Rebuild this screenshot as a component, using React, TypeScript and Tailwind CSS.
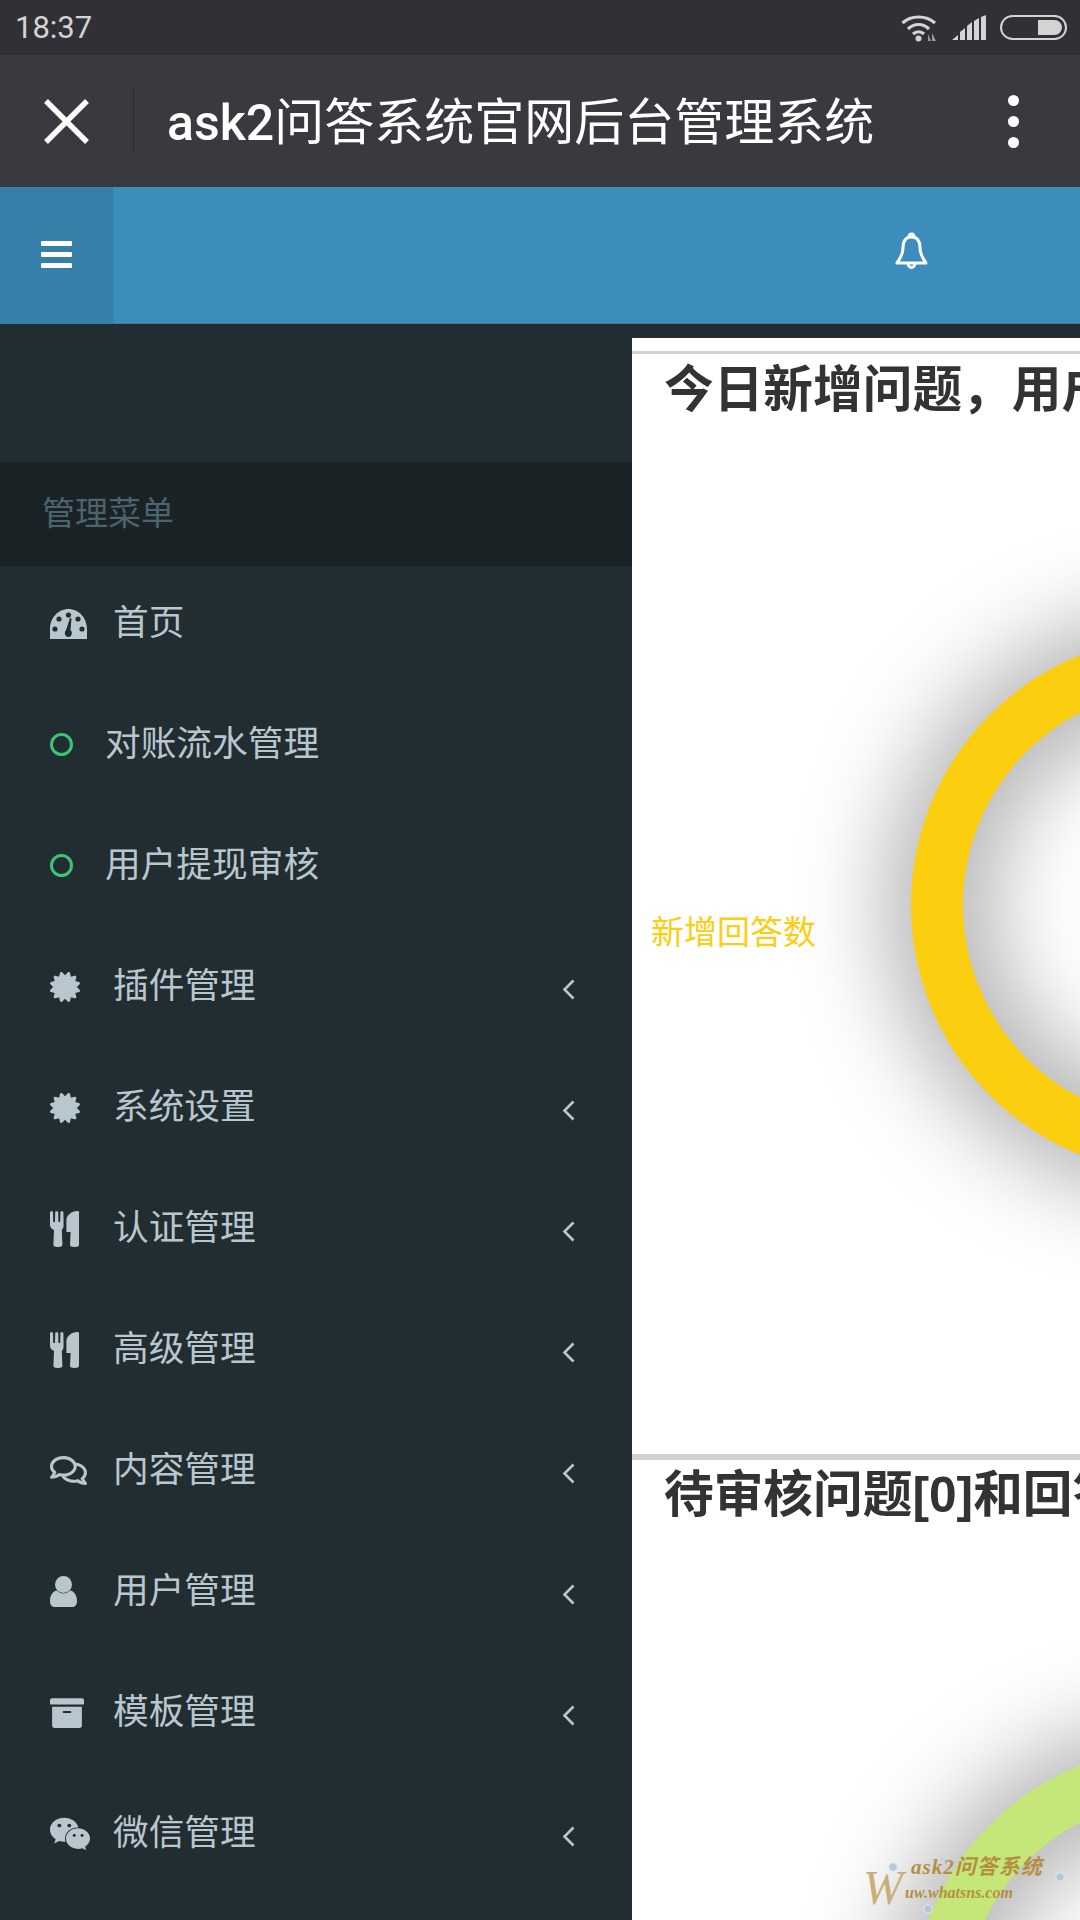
import React from "react";
import { FaCertificate, FaRegComments, FaArchive, FaWeixin } from "react-icons/fa";

const SANS = "font-['Liberation_Sans','Noto_Sans_CJK_SC',sans-serif]";

function Dashboard() {
  return (
    <svg width="37" height="30" viewBox="0 0 37 30" className="block">
      <path d="M0 30 C-1 28 0 24 0 20 C0 9 8 0 18.5 0 C29 0 37 9 37 20 C37 24 38 28 37 30 Z" fill="#b8c7ce" />
      <g fill="#222d32">
        <circle cx="18.5" cy="6" r="2.6" />
        <circle cx="9" cy="10" r="2.6" />
        <circle cx="28" cy="10" r="2.6" />
        <circle cx="5" cy="20" r="2.6" />
        <circle cx="32" cy="20" r="2.6" />
        <path d="M16 21 L20 9 L21.5 9.5 L20.5 21 C23 23 22 28 18.5 28 C14.5 28 14 23 16 21 Z" />
      </g>
    </svg>
  );
}

function Cutlery() {
  return (
    <svg width="29" height="36" viewBox="0 0 29 36" className="block" fill="#b8c7ce">
      <path d="M0 1 C0 0 3 0 3 1 L3.2 11 L5 11 L5.2 1 C5.2 0 8.2 0 8.2 1 L8.4 11 L10.2 11 L10.4 1 C10.4 0 13.4 0 13.4 1 L13.6 14 C13.6 17 12.5 18 11.8 19 L12.4 34 C12.4 36.7 3.4 36.7 3.4 34 L4 19 C1.5 18 0 16 0 14 Z" />
      <path d="M29 1 L29 34 C29 36.7 20 36.7 20 34 L20.6 21 L16.4 21 L16.4 9 C16.4 4 22 0 27 0 C28 0 29 0 29 1 Z" />
    </svg>
  );
}

function User() {
  return (
    <svg width="27" height="31" viewBox="0 0 27 31" className="block" fill="#b8c7ce">
      <circle cx="13.5" cy="8.5" r="8.5" />
      <path d="M0 25 C0 19 3 15 7 14.5 C9 16.5 11 17.5 13.5 17.5 C16 17.5 18 16.5 20 14.5 C24 15 27 19 27 25 C27 29 25 31 22 31 L5 31 C2 31 0 29 0 25 Z" />
    </svg>
  );
}

function Chevron() {
  return (
    <svg width="13" height="21" viewBox="0 0 13 21" className="block" fill="none" stroke="#b8c7ce" strokeWidth="2.6">
      <path d="M11.5 1.5 L2.5 10.5 L11.5 19.5" />
    </svg>
  );
}

function Ring({ cy, color, id, height }: { cy: number; color: string; id: string; height: number }) {
  return (
    <svg width="448" height={height} viewBox={`0 0 448 ${height}`} className="block">
      <defs>
        <filter id={id} filterUnits="userSpaceOnUse" x="-400" y="-800" width="1800" height="2800">
          <feGaussianBlur stdDeviation="52" />
        </filter>
      </defs>
      <circle cx="548" cy={cy} r="243" fill="none" stroke="#000" strokeOpacity="0.6" strokeWidth="52" filter={`url(#${id})`} />
      <circle cx="548" cy={cy} r="243" fill="none" stroke={color} strokeWidth="52" />
    </svg>
  );
}

function Diamond({ className }: { className: string }) {
  return (
    <svg width="10" height="10" viewBox="0 0 10 10" className={className}>
      <circle cx="5" cy="5" r="4.2" fill="#b6c8d6" stroke="#e4ecf2" strokeWidth="1" />
    </svg>
  );
}

type Item = { label: string; icon: React.ReactNode; chevron?: boolean; sub?: boolean };

const dot = <span className="block w-[23px] h-[23px] rounded-full border-[3px] border-[#3dc373]" />;
const cert = <FaCertificate className="block text-[#b8c7ce]" size={30} />;

const items: Item[] = [
  { label: "首页", icon: <Dashboard /> },
  { label: "对账流水管理", icon: dot, sub: true },
  { label: "用户提现审核", icon: dot, sub: true },
  { label: "插件管理", icon: cert, chevron: true },
  { label: "系统设置", icon: cert, chevron: true },
  { label: "认证管理", icon: <Cutlery />, chevron: true },
  { label: "高级管理", icon: <Cutlery />, chevron: true },
  { label: "内容管理", icon: <FaRegComments className="block text-[#b8c7ce]" size={37} />, chevron: true },
  { label: "用户管理", icon: <User />, chevron: true },
  { label: "模板管理", icon: <FaArchive className="block text-[#b8c7ce]" size={34} />, chevron: true },
  { label: "微信管理", icon: <FaWeixin className="block -ml-[1px] text-[#b8c7ce]" size={42} />, chevron: true },
];

export default function App() {
  return (
    <div className={`w-[1080px] h-[1920px] overflow-hidden flex flex-col ${SANS}`}>
      {/* status bar */}
      <div className="h-[55px] shrink-0 bg-[#303136] flex items-center pl-[15px] pr-[13px]">
        <span className="font-['Roboto','Noto_Sans',sans-serif] text-[31px] leading-none text-[#d4d4d4]">18:37</span>
        <div className="ml-auto flex items-center">
          <svg width="36" height="28" viewBox="0 0 36 28" className="block" fill="none" stroke="#d4d4d4" strokeWidth="3.2">
            <path d="M1.5 9 C10 1 25 1 34 9" />
            <path d="M7 15 C13 9 22 9 28 15" />
            <path d="M12 20 C15.5 17 20 17 23 20" />
            <circle cx="17.5" cy="24.5" r="3" fill="#d4d4d4" stroke="none" />
            <path d="M27 27 L27 20 L30 27 Z M31 27 L31 19 L35 27 Z" fill="#9a9a9a" stroke="none" />
          </svg>
          <svg width="35" height="25" viewBox="0 0 35 25" className="block ml-[15px]" fill="#d4d4d4">
            <path d="M0 25 L6 20 L6 25 Z M8 25 L8 17 L13 13 L13 25 Z M15 25 L15 11 L20 7 L20 25 Z M22 25 L22 6 L27 3 L27 25 Z M29 25 L29 2 L34 0 L34 25 Z" />
          </svg>
          <div className="ml-[13px] w-[67px] h-[25px] rounded-full border-[2px] border-[#d4d4d4] p-[3px] flex justify-end">
            <div className="w-[24px] h-full bg-[#d4d4d4] rounded-r-full" />
          </div>
        </div>
      </div>

      {/* title bar */}
      <div className="h-[132px] shrink-0 bg-[#393a40] flex items-center">
        <div className="w-[134px] h-[66px] border-r-[1px] border-[#2a2b2f] flex items-center pl-[44px]">
          <svg width="45" height="45" viewBox="0 0 45 45" className="block" stroke="#fff" strokeWidth="5.4" fill="none">
            <path d="M2 2 L43 43 M43 2 L2 43" />
          </svg>
        </div>
        <div className="ml-[33px] pt-[4px] text-[50px] leading-none text-white whitespace-nowrap font-['Roboto','Noto_Sans_CJK_SC',sans-serif]">
          <span className="font-medium">ask2</span>问答系统官网后台管理系统
        </div>
        <div className="ml-auto mr-[61px] flex flex-col gap-[10px]">
          <span className="block w-[11px] h-[11px] rounded-full bg-white" />
          <span className="block w-[11px] h-[11px] rounded-full bg-white" />
          <span className="block w-[11px] h-[11px] rounded-full bg-white" />
        </div>
      </div>

      {/* blue header */}
      <div className="h-[137px] shrink-0 bg-[#3c8dbc] border-b-[1px] border-[#367fa9] flex">
        <div className="w-[113px] bg-[#367fa9] flex flex-col items-center justify-center gap-[6px] pb-[2px]">
          <span className="block w-[31px] h-[5px] bg-white rounded-[1px]" />
          <span className="block w-[31px] h-[5px] bg-white rounded-[1px]" />
          <span className="block w-[31px] h-[5px] bg-white rounded-[1px]" />
        </div>
        <div className="ml-[782px] flex items-center mb-[8px]">
          <svg width="33" height="38" viewBox="0 0 33 38" className="block" fill="none" stroke="#fff" strokeWidth="3" strokeLinejoin="round">
            <path d="M16.5 5 C10 5 8 10 8 16 C8 23 5 26 2 31 L31 31 C28 26 25 23 25 16 C25 10 23 5 16.5 5 Z" />
            <path d="M14 5 C14 1 19 1 19 5" />
            <path d="M13 31 C13 37 20 37 20 31" />
          </svg>
        </div>
      </div>

      <div className="flex-1 min-h-0 flex">
        {/* sidebar */}
        <aside className="w-[632px] shrink-0 bg-[#222d32] flex flex-col">
          <div className="h-[138px] shrink-0" />
          <div className="h-[104px] shrink-0 bg-[#1a2226] flex items-center pl-[42px] text-[33px] text-[#4b646f]">管理菜单</div>
          {items.map((it) => (
            <div key={it.label} className="h-[121px] shrink-0 flex items-center pl-[50px] text-[#b8c7ce] text-[35.7px] pb-[6px]">
              <div className={it.sub ? "w-[55px]" : "w-[63px]"}>{it.icon}</div>
              <span>{it.label}</span>
              {it.chevron && (
                <div className="ml-auto mr-[57px] mt-[5px]">
                  <Chevron />
                </div>
              )}
            </div>
          ))}
        </aside>

        {/* content */}
        <main className="w-[448px] bg-[#222d32] pt-[14px] overflow-hidden">
          <div className="relative bg-white h-full flex flex-col overflow-hidden">
            <div className="h-[13px] shrink-0" />
            <div className="h-[3px] shrink-0 bg-[#d2d2d2]" />
            <h3 className="h-[70px] shrink-0 pl-[32px] text-[49.7px] leading-[72px] font-bold text-[#333] whitespace-nowrap">今日新增问题，用户和回答</h3>
            <div className="relative h-[1030px] shrink-0">
              <Ring id="s1" cy={481} color="#fcce10" height={1030} />
              <span className="absolute left-[19px] top-[487px] text-[33px] leading-[44px] text-[#fcce10] whitespace-nowrap">新增回答数</span>
            </div>
            <div className="h-[6px] shrink-0 bg-[#d2d2d2]" />
            <h3 className="h-[68px] shrink-0 pl-[32px] text-[49.7px] leading-[70px] font-bold text-[#333] whitespace-nowrap">待审核问题[0]和回答</h3>
            <div className="relative flex-1">
              <Ring id="s2" cy={487} color="#c5e678" height={392} />
            </div>
            {/* watermark */}
            <div className="absolute left-[231px] bottom-[4px] w-[200px] h-[60px] text-[#b48f43] italic font-['Liberation_Serif','Noto_Sans_CJK_SC',serif]">
              <span className="absolute left-[0px] top-[8px] text-[48px] leading-[48px] text-[#c9ae78] font-light">W</span>
              <span className="absolute left-[48px] top-[-2px] text-[21px] leading-[26px] font-bold tracking-[1px] whitespace-nowrap">ask2问答系统</span>
              <span className="absolute left-[42px] top-[27px] text-[16px] leading-[20px] font-bold whitespace-nowrap">uw.whatsns.com</span>
              <Diamond className="absolute left-[25px] top-[6px]" />
              <Diamond className="absolute left-[60px] top-[48px]" />
              <Diamond className="absolute left-[192px] top-[16px]" />
            </div>
          </div>
        </main>
      </div>
    </div>
  );
}
